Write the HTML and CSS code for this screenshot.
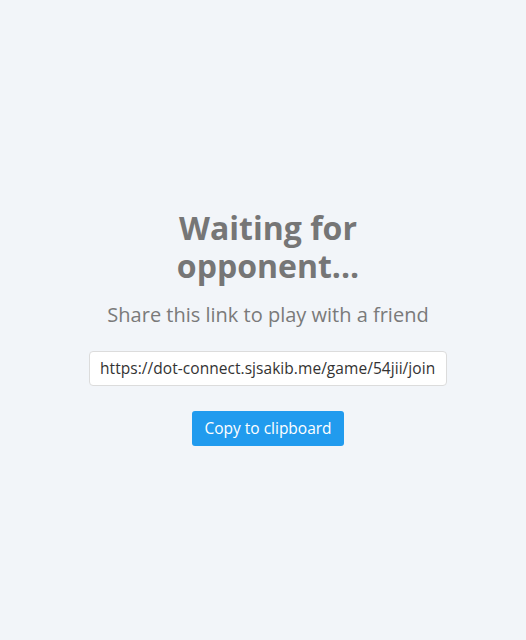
FILE: index.html
```html
<!DOCTYPE html>
<html>
<head>
<meta charset="utf-8">
<link rel="stylesheet" href="styles.css">
</head>
<body>
<main class="page">
  <h1 class="title">Waiting for opponent...</h1>
  <p class="subtitle">Share this link to play with a friend</p>
  <input class="link" type="text" readonly value="https://dot-connect.sjsakib.me/game/54jii/join">
  <button class="copy">Copy to clipboard</button>
</main>
</body>
</html>
```
FILE: styles.css
```css
html, body {
  margin: 0;
  padding: 0;
  background: #f2f5f9;
}
.page {
  min-height: 640px;
  display: flex;
  flex-direction: column;
  align-items: center;
  justify-content: center;
  font-family: "Open Sans", sans-serif;
  padding: 14px 0 0 10px;
  box-sizing: border-box;
}
.title {
  width: 220px;
  margin: 0;
  text-align: center;
  font-size: 32px;
  line-height: 38px;
  font-weight: 700;
  color: #767676;
}
.subtitle {
  margin: 16px 0 0;
  font-size: 20px;
  line-height: 28px;
  color: #7a7a7a;
}
.link {
  margin-top: 22px;
  width: 358px;
  height: 35px;
  box-sizing: border-box;
  border: 1px solid #dcdcdc;
  border-radius: 4px;
  background: #fff;
  padding: 0 10px;
  font-family: "Open Sans", sans-serif;
  font-size: 15.5px;
  letter-spacing: 0.05px;
  color: #333;
  outline: none;
}
.copy {
  margin-top: 25px;
  height: 35px;
  padding: 0 12px;
  border: none;
  border-radius: 3px;
  background: #219bee;
  color: #fff;
  font-family: "Open Sans", sans-serif;
  font-size: 15.5px;
}
```
